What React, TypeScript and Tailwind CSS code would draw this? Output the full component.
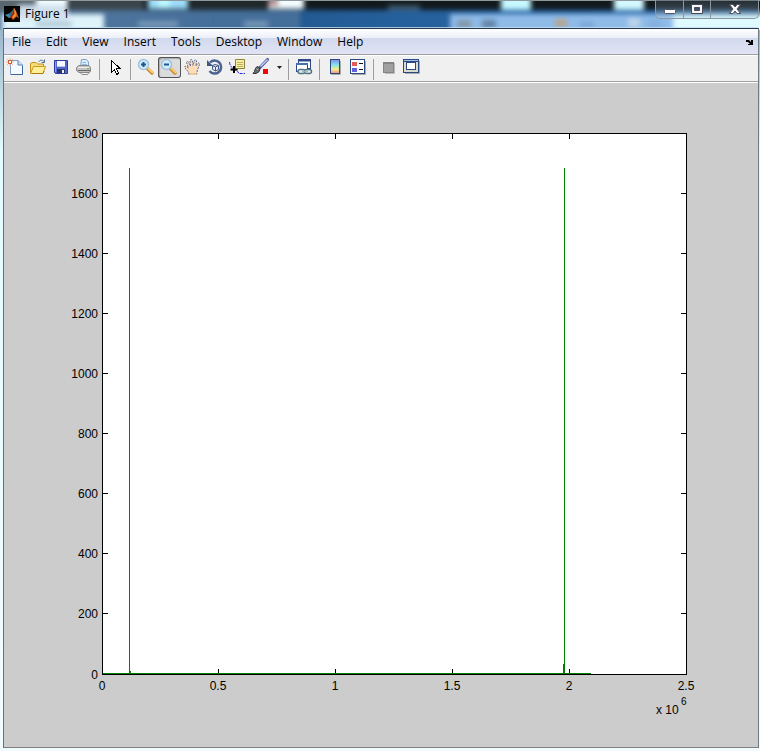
import { ReactNode } from 'react';

const MENUS = ['File', 'Edit', 'View', 'Insert', 'Tools', 'Desktop', 'Window', 'Help'];

function Icon({ children, size = 18 }: { children: ReactNode; size?: number }) {
  return (
    <svg width={size} height={size} viewBox={`0 0 ${size} ${size}`} className="shrink-0" aria-hidden="true">
      {children}
    </svg>
  );
}

/* Desktop seen through the glass frame */
function Glass() {
  return (
    <svg
      className="absolute inset-x-0 top-0 h-[30px] w-full"
      viewBox="0 0 760 30"
      preserveAspectRatio="none"
      aria-hidden="true"
    >
      <defs>
        <filter id="soft" x="-5%" y="-60%" width="110%" height="220%" colorInterpolationFilters="sRGB">
          <feGaussianBlur stdDeviation="2.500" />
        </filter>
        <linearGradient id="bar" x1="0" x2="1" y1="0" y2="0">
          <stop offset="0" stopColor="#56799c" />
          <stop offset="0.28" stopColor="#456f9b" />
          <stop offset="0.39" stopColor="#456f9b" />
          <stop offset="0.4" stopColor="#235a92" />
          <stop offset="0.52" stopColor="#25609c" />
          <stop offset="1" stopColor="#2d6aa8" />
        </linearGradient>
      </defs>
      <rect width="760" height="30" fill="url(#bar)" />
      <g filter="url(#soft)">
        <rect x="-10" y="-12" width="780" height="22" fill="#11191d" />
        <rect x="-10" y="-12" width="46" height="23" fill="#59666f" />
        <rect x="70" y="-12" width="74" height="22" fill="#3a454b" />
        <rect x="188" y="-12" width="78" height="22" fill="#20282b" />
        <rect x="36" y="-12" width="32" height="30" fill="#f2fcff" />
        <rect x="148" y="-12" width="40" height="21" fill="#9ddcf8" />
        <rect x="158" y="-12" width="12" height="20" fill="#bdf6ff" />
        <rect x="268" y="-12" width="36" height="21" fill="#f4fcff" />
        <rect x="268" y="-12" width="10" height="18" fill="#b48f93" />
        <rect x="501" y="-12" width="30" height="22" fill="#c6f8ff" />
        <rect x="614" y="-12" width="30" height="22" fill="#d2f9ff" />
        <rect x="388" y="5" width="32" height="5" fill="#3e5567" />
        <rect x="450" y="14" width="224" height="24" fill="#8fbbe9" />
        <rect x="673" y="14" width="100" height="24" fill="#dffbff" />
        <rect x="2" y="14" width="102" height="24" fill="#dff3fa" />
        <rect x="18" y="5" width="50" height="14" fill="#cfe0ec" />
        <rect x="36" y="21" width="36" height="6" fill="#b4ccda" />
        <rect x="138" y="21" width="40" height="6" fill="#7898b8" />
        <rect x="244" y="21" width="24" height="6" fill="#7898b7" />
        <rect x="457" y="20" width="14" height="8" fill="#8297a8" />
        <rect x="482" y="20" width="14" height="8" fill="#6483a4" />
        <rect x="555" y="19" width="12" height="8" fill="#b7a58e" />
        <rect x="580" y="22" width="14" height="5" fill="#76a3d2" />
        <rect x="628" y="18" width="12" height="9" fill="#bfd4ea" />
        <rect x="648" y="20" width="14" height="8" fill="#83b0e0" />
      </g>
      <path d="M213.500 14V28" stroke="#3c638b" strokeOpacity="0.5" />
      <path d="M0 .5H760" stroke="#8e989b" />
      <path d="M3 27.500H758" stroke="#c4dfec" strokeOpacity="0.8" />
    </svg>
  );
}

function MatlabLogo() {
  return (
    <Icon size={16}>
      <rect width="16" height="16" fill="#050505" />
      <path d="M1 9 5 7.500 7.500 9.500 5 12Z" fill="#3c8fb4" />
      <path d="M5 7.500 8 5 10 2 8 9 6 11Z" fill="#2e6584" />
      <path d="M5 12 7.500 9.500 10 2 12 5 15 12.500 12.500 10.500 9 14 7.500 11.500Z" fill="#d95a17" />
      <path d="M10 2 12 6 11.500 10 8.500 12.500Z" fill="#f59b35" />
      <path d="M10 2 10.500 8 7.500 11.500 6 11.500 8 9Z" fill="#8b2c14" />
    </Icon>
  );
}

function NewIcon() {
  return (
    <Icon>
      <path d="M4.500 2.500H12L16.500 7V16.500H4.500Z" fill="#f4faff" stroke="#7e9fca" />
      <path d="M5 16.500H16.500V8" fill="none" stroke="#3d659e" />
      <path d="M12 2.500V7H16.500" fill="#cce0f4" stroke="#5a80b4" />
      <path d="M1 1 7 7M7 1 1 7M4 0V8M0 4H8" stroke="#f4b294" />
      <rect x="2.500" y="2.500" width="3" height="3" fill="#fff3c0" stroke="#d9603a" />
    </Icon>
  );
}

function OpenIcon() {
  return (
    <Icon>
      <path d="M1.500 15V5.500L3 4.500H7L8.500 6H14.500V9" fill="#f8dc77" stroke="#c49218" />
      <path d="M1.500 15.500 4.500 8.500H16.500L14 15.500Z" fill="#ffef96" stroke="#cc9921" />
      <path d="M3 15.500H14L15 13" fill="none" stroke="#a87a10" />
      <path d="M9.500 4Q12 .5 15 3.500M12.500 4.500H15.500V1.500" fill="none" stroke="#56779b" />
    </Icon>
  );
}

function SaveIcon() {
  return (
    <Icon>
      <path d="M2.500 2.500H15.500V15.500H3.500L2.500 14.500Z" fill="#5367ca" stroke="#2d3c9c" />
      <path d="M3.500 3.500V14" stroke="#8d9cf0" />
      <rect x="5" y="3" width="8" height="6" fill="#f6f8ff" />
      <path d="M5 8.500H13" stroke="#b9c8e6" />
      <rect x="5" y="11" width="8" height="4" fill="#25346b" />
      <rect x="10" y="12" width="2" height="3" fill="#eef2f8" />
    </Icon>
  );
}

function PrintIcon() {
  return (
    <Icon>
      <path d="M5.500 8 6.500 1.500H11.500L13.500 4V8Z" fill="#d8ecff" stroke="#83a5c8" />
      <path d="M7.500 4.500H11M7 6.500H12" stroke="#90b8dd" />
      <path d="M1.500 9.500 4 7.500H14L15.500 9.500V13.500L14 14.500H4L1.500 12.500Z" fill="#c2c2c2" stroke="#888" />
      <path d="M3 9.500H14" stroke="#eee" />
      <path d="M3 12.500H15" stroke="#666" />
      <path d="M5 14.500H14L12.500 16.500H7Z" fill="#f3f3f3" stroke="#888" />
      <rect x="12" y="10" width="2" height="1" fill="#80a84b" />
    </Icon>
  );
}

function PointerIcon() {
  return (
    <Icon>
      <path
        d="M5.500 2.500V14.500L8.500 11.500 10.500 16.500 12.500 15.500 10.500 10.500H14Z"
        fill="#fff"
        stroke="#000"
        shapeRendering="crispEdges"
      />
    </Icon>
  );
}

function ZoomIcon({ plus }: { plus?: boolean }) {
  return (
    <Icon>
      <path d="M10.500 10.500 15 15" stroke="#c08a3a" strokeWidth="3.500" strokeLinecap="round" />
      <path d="M11 10 15.500 14.500" stroke="#ffcb73" strokeWidth="2" strokeLinecap="round" />
      <circle cx="6.500" cy="6.500" r="5" fill="#cdeeff" stroke="#a3bfdc" strokeWidth="1.500" />
      <path d="M4 6.500H9" stroke="#225486" strokeWidth="2" />
      {plus && <path d="M6.500 4V9" stroke="#225486" strokeWidth="2" />}
    </Icon>
  );
}

function HandIcon() {
  return (
    <Icon>
      <path
        d="M6 16.500 5.500 14 1.500 9.500Q1.500 7.500 3.500 8.500L5.500 10 3.500 4.500Q4 2.500 5.500 4L7.500 8 7 2.500Q8 .5 9.500 2.500L10 7.500 11.500 2.500Q13 1 13.500 3L13 8 15 5Q17 4.500 16.500 6.500L14.500 12 13.500 16.500Z"
        fill="#ffdcb8"
      />
      <path
        d="M6 16.500 5.500 14 1.500 9.500Q1.500 7.500 3.500 8.500L5.500 10 3.500 4.500Q4 2.500 5.500 4L7.500 8 7 2.500Q8 .5 9.500 2.500L10 7.500 11.500 2.500Q13 1 13.500 3L13 8 15 5Q17 4.500 16.500 6.500L14.500 12 13.500 16.500"
        fill="none"
        stroke="#5a6f9a"
        strokeDasharray="2 1"
      />
      <path d="M6 16H14" stroke="#e8ae75" />
    </Icon>
  );
}

function RotateIcon() {
  return (
    <Icon>
      <path d="M4 4.500A6.500 6.500 0 1 1 3.500 13" fill="none" stroke="#4b6391" strokeWidth="2.500" />
      <path d="M1 2V8H7Z" fill="#405681" />
      <path d="M6.500 7.500 9 6.500 12.500 7.500V11.500L9.500 13 6.500 11.500Z" fill="#e5edf9" stroke="#405681" />
      <path d="M6.500 7.500 9.500 9 12.500 7.500M9.500 9V13" fill="none" stroke="#405681" />
    </Icon>
  );
}

function DataCursorIcon() {
  return (
    <Icon>
      <path d="M.5 4Q1 9 4.500 10.500T10 15.500H16" fill="none" stroke="#272bea" strokeDasharray="3 1" />
      <path d="M6.500 1.500H15.500V10.500H9L6.500 12V1.500Z" fill="#f5ef9c" stroke="#8d853d" />
      <path d="M8 4.500H14M8 6.500H14M8 8.500H14" stroke="#b9b06c" />
      <path d="M5 8V15M1.500 11.500H8.500" stroke="#000" strokeWidth="2" />
    </Icon>
  );
}

function BrushIcon() {
  return (
    <Icon>
      <path d="M8 9.500 15.500 1.500" stroke="#4c559a" strokeWidth="3" strokeLinecap="round" />
      <path d="M8.500 8.500 15.500 1.500" stroke="#c3cefa" strokeWidth="1.500" />
      <path d="M6 8.500 8 11Q8 14 4 15.500H1Q3 13.500 3 11.500Q4 8.500 6 8.500Z" fill="#686b6c" stroke="#303638" />
      <path d="M5 10.500 6 12" stroke="#c4c6c6" />
      <rect x="11" y="11" width="5" height="5" fill="#f20505" />
    </Icon>
  );
}

function LinkIcon() {
  return (
    <Icon>
      <rect x="3.500" y="1.500" width="12" height="9" fill="#fff" stroke="#2c4988" />
      <path d="M3 2.500H16" stroke="#2c4988" strokeWidth="2" />
      <rect x="1.500" y="5.500" width="11" height="8" fill="#fff" stroke="#2c4988" />
      <path d="M1 6H13" stroke="#4770b2" strokeWidth="2" />
      <rect x="3" y="11.500" width="7" height="4" rx="2" fill="#e4edf0" stroke="#547483" strokeWidth="1.500" />
      <rect x="9.500" y="11.500" width="7" height="4" rx="2" fill="#e4edf0" stroke="#547483" strokeWidth="1.500" />
      <path d="M7 13.500H13" stroke="#9eb8c3" strokeWidth="1.500" />
    </Icon>
  );
}

function ColorbarIcon() {
  return (
    <Icon>
      <defs>
        <linearGradient id="jet" x1="0" x2="0" y1="0" y2="1">
          <stop offset="0" stopColor="#8a86e9" />
          <stop offset="0.35" stopColor="#7edff0" />
          <stop offset="0.7" stopColor="#f5ed91" />
          <stop offset="1" stopColor="#ef8d84" />
        </linearGradient>
      </defs>
      <path d="M14.500 3V16.500H5" fill="none" stroke="#aaa" />
      <rect x="4.500" y="1.500" width="9" height="14" fill="url(#jet)" stroke="#2b497e" />
    </Icon>
  );
}

function LegendIcon() {
  return (
    <Icon>
      <path d="M16.500 3V16.500H3" fill="none" stroke="#aaa" />
      <rect x="1.500" y="1.500" width="14" height="14" fill="#fafbff" stroke="#2b497e" />
      <rect x="3" y="4" width="5" height="4" fill="#e35a58" />
      <rect x="3" y="10" width="5" height="4" fill="#6260dc" />
      <path d="M10 5.500H14M10 11.500H14" stroke="#111" />
    </Icon>
  );
}

function HideToolsIcon() {
  return (
    <Icon>
      <path d="M14.500 5V15.500H5" fill="none" stroke="#bbb" />
      <rect x="3.500" y="4.500" width="10" height="10" fill="#a0a0a0" stroke="#858585" />
      <path d="M3 5H14" stroke="#858585" strokeWidth="2" />
    </Icon>
  );
}

function ShowToolsIcon() {
  return (
    <Icon>
      <path d="M16.500 3V15.500H2" fill="none" stroke="#aaa" />
      <rect x="0.500" y="1.500" width="15" height="13" fill="#d9dccc" stroke="#2b497e" />
      <path d="M0 2.500H16" stroke="#2b497e" strokeWidth="3" />
      <path d="M1 2.500H15" stroke="#a9bee5" />
      <rect x="3.500" y="4.500" width="9" height="7" fill="#fff" stroke="#2b497e" />
    </Icon>
  );
}

function ToolButton({ label, active, children }: { label: string; active?: boolean; children: ReactNode }) {
  return (
    <button
      type="button"
      aria-label={label}
      aria-pressed={active}
      className={`flex h-[21px] w-[23px] shrink-0 items-start pt-px pl-0.5 ${
        active ? 'rounded-[3px] bg-[#dcdcdc] shadow-[inset_0_0_0_1px_#555,inset_2px_2px_1px_#aaa]' : ''
      }`}
    >
      {children}
    </button>
  );
}

function Separator() {
  return <div className="mt-0.5 mr-1 ml-[3px] h-[21px] w-px shrink-0 bg-[#9d9d9d]" />;
}

function Toolbar() {
  return (
    <div
      role="toolbar"
      aria-label="Figure toolbar"
      className="flex h-[28px] items-start border-t border-b border-t-white border-b-white bg-[#f0f0f0] pt-px shadow-[inset_0_-1px_0_#a0a0a0]"
    >
      <ToolButton label="New Figure"><NewIcon /></ToolButton>
      <ToolButton label="Open File"><OpenIcon /></ToolButton>
      <ToolButton label="Save Figure"><SaveIcon /></ToolButton>
      <ToolButton label="Print Figure"><PrintIcon /></ToolButton>
      <Separator />
      <ToolButton label="Edit Plot"><PointerIcon /></ToolButton>
      <Separator />
      <ToolButton label="Zoom In"><ZoomIcon plus /></ToolButton>
      <ToolButton label="Zoom Out" active><ZoomIcon /></ToolButton>
      <ToolButton label="Pan"><HandIcon /></ToolButton>
      <ToolButton label="Rotate 3D"><RotateIcon /></ToolButton>
      <ToolButton label="Data Cursor"><DataCursorIcon /></ToolButton>
      <ToolButton label="Brush"><BrushIcon /></ToolButton>
      <button type="button" aria-label="Brush colors" className="flex h-[21px] w-3 items-center justify-center">
        <svg width="5" height="3" viewBox="0 0 5 3" aria-hidden="true">
          <path d="M0 0H5L2.500 3Z" fill="#222" />
        </svg>
      </button>
      <Separator />
      <ToolButton label="Link Plot"><LinkIcon /></ToolButton>
      <Separator />
      <ToolButton label="Insert Colorbar"><ColorbarIcon /></ToolButton>
      <ToolButton label="Insert Legend"><LegendIcon /></ToolButton>
      <Separator />
      <ToolButton label="Hide Plot Tools"><HideToolsIcon /></ToolButton>
      <ToolButton label="Show Plot Tools"><ShowToolsIcon /></ToolButton>
    </div>
  );
}

const AXES = { left: 98, top: 50, right: 682, bottom: 591 };
const Y_TICKS = [0, 200, 400, 600, 800, 1000, 1200, 1400, 1600, 1800];
const X_TICKS = [0, 0.5, 1, 1.5, 2, 2.5];

const xPos = (v: number) => AXES.left + Math.floor((v / 2.5) * (AXES.right - AXES.left));
const yPos = (v: number) => AXES.bottom - Math.ceil((v / 1800) * (AXES.bottom - AXES.top));

function Plot() {
  const { left, top, right, bottom } = AXES;
  return (
    <svg
      viewBox="0 0 754 664"
      className="block w-full bg-[#cccccc] font-['Liberation_Sans',Arial,sans-serif] text-[12px]"
      role="img"
      aria-label="Line plot with two peaks"
    >
      <g shapeRendering="crispEdges" transform="translate(0.5 0.5)" fill="none" stroke="#000">
        <rect x={left} y={top} width={right - left} height={bottom - top} fill="#fff" />
        {Y_TICKS.map((v) => (
          <path key={v} d={`M${left} ${yPos(v)}h5M${right} ${yPos(v)}h-6`} />
        ))}
        {X_TICKS.map((v) => (
          <path key={v} d={`M${xPos(v)} ${bottom}v-6M${xPos(v)} ${top}v5`} />
        ))}
        <path
          d={`M${left} ${bottom - 1}H586M125 ${bottom}V84M126 ${bottom}V587M560 ${bottom}V84M559 ${bottom}V580`}
          stroke="#007f00"
        />
        <path d={`M${left} ${bottom}H${right}`} />
      </g>
      <g textAnchor="end">
        {Y_TICKS.map((v) => (
          <text key={v} x="94" y={yPos(v) + 5}>{v}</text>
        ))}
      </g>
      <g textAnchor="middle">
        {X_TICKS.map((v) => (
          <text key={v} x={xPos(v)} y="607">{v}</text>
        ))}
      </g>
      <text x="652" y="631">x 10</text>
      <text x="677" y="622" fontSize="10">6</text>
    </svg>
  );
}

function CaptionButtons() {
  return (
    <div className="flex h-[19px] overflow-hidden rounded-b-[5px] border border-t-0 border-[#8b979e] bg-gradient-to-b from-[#414d57]/40 to-[#c7deec]/30">
      <button type="button" aria-label="Minimize" className="flex w-7 items-center justify-center border-r border-[#8b979e] pt-1">
        <svg width="12" height="5" viewBox="0 0 12 5" aria-hidden="true">
          <rect x=".5" y=".5" width="11" height="4" rx="1" fill="#fff" stroke="#544f60" />
        </svg>
      </button>
      <button type="button" aria-label="Maximize" className="flex w-[27px] items-center justify-center border-r border-[#8b979e]">
        <svg width="12" height="10" viewBox="0 0 12 10" aria-hidden="true">
          <path d="M.5.5H11.500V9.500H.5ZM3.500 3.500V6.500H8.500V3.500Z" fill="#f7f7f7" fillRule="evenodd" stroke="#464759" />
        </svg>
      </button>
      <button type="button" aria-label="Close" className="flex w-[47px] items-center justify-center">
        <svg width="12" height="10" viewBox="0 0 12 10" aria-hidden="true">
          <path d="M.5.5H4L6 3 8 .5H11.500L8 5 11.500 9.500H8L6 7 4 9.500H.5L4 5Z" fill="#fff" stroke="#50515f" />
        </svg>
      </button>
    </div>
  );
}

export default function App() {
  return (
    <div className="relative bg-gradient-to-b from-[#89a6bd] via-[#e3fcff] via-20% to-[#f2fcff] pr-px pb-[3px] pl-[3px] font-['Open_Sans','Noto_Sans',sans-serif] text-black">
      <Glass />
      <header className="relative flex h-7 items-start justify-between pl-px">
        <div className="flex h-7 items-center gap-[5px]">
          <MatlabLogo />
          <h1 className="text-[12px] leading-4">Figure 1</h1>
        </div>
        <CaptionButtons />
      </header>
      <main className="relative border border-t-[#26384f] border-r-[#6f7c85] border-b-[#7f7f7f] border-l-[#66707a] bg-[#cccccc]">
        <nav
          aria-label="Figure menu"
          className="flex h-[26px] items-center gap-[15px] border-b border-[#a0a0a0] bg-[linear-gradient(#ffffff,#eceff9_9px,#d2d9ed_9px,#e0e4f4)] pr-1 pl-2 text-[12px] leading-4"
        >
          {MENUS.map((name) => (
            <button key={name} type="button">{name}</button>
          ))}
          <button type="button" aria-label="Dock Figure" className="ml-auto">
            <svg width="8" height="6" viewBox="0 0 8 6" aria-hidden="true">
              <path d="M0 1H3L5 3V1H7V6H2V5H4L2 3H0Z" fill="#000" />
            </svg>
          </button>
        </nav>
        <Toolbar />
        <Plot />
      </main>
    </div>
  );
}
